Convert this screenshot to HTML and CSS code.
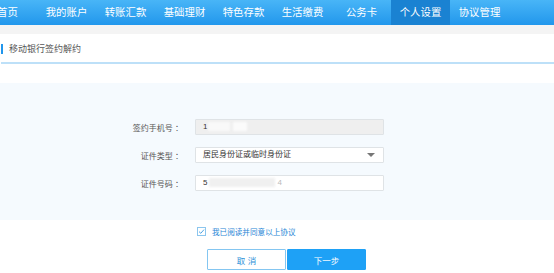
FILE: index.html
```html
<!DOCTYPE html>
<html>
<head>
  <title>移动银行签约解约</title>
  <meta charset="utf-8">
  <link rel="stylesheet" href="styles.css">
</head>
<body>
  <nav class="topnav">
    <a>首页</a>
    <a>我的账户</a>
    <a>转账汇款</a>
    <a>基础理财</a>
    <a>特色存款</a>
    <a>生活缴费</a>
    <a>公务卡</a>
    <a class="active">个人设置</a>
    <a>协议管理</a>
  </nav>
  <div class="subbar"></div>
  <div class="page-title">移动银行签约解约</div>

  <form class="sign-form">
    <div class="row">
      <label>签约手机号 ：</label>
      <div class="field readonly">1<span class="mask m1"></span><span class="mask m2"></span></div>
    </div>
    <div class="row">
      <label>证件类型 ：</label>
      <div class="field select">居民身份证或临时身份证<span class="arrow"></span></div>
    </div>
    <div class="row">
      <label>证件号码 ：</label>
      <div class="field">5<span class="mask m3"></span><span class="faint">4</span></div>
    </div>
  </form>

  <div class="agree">
    <span class="checkbox">
      <svg width="9" height="9" viewBox="0 0 9 9"><rect x="0.5" y="0.5" width="8" height="8" fill="#fff" stroke="#8cc6ee"/><path d="M2 4.6 L3.8 6.3 L7 2.6" fill="none" stroke="#3a9be0" stroke-width="0.9"/></svg>
    </span>
    我已阅读并同意以上协议
  </div>

  <div class="actions">
    <button type="button" class="btn btn-cancel">取 消</button>
    <button type="button" class="btn btn-next">下一步</button>
  </div>
</body>
</html>
```
FILE: styles.css
```css
body {
  margin: 0;
  padding: 0;
  background: #fff;
  font-family: "Liberation Sans", "Noto Sans CJK SC", sans-serif;
  color: #444;
  overflow: hidden;
}
.topnav {
  display: flex;
  height: 25px;
  margin-left: -22px;
  background: linear-gradient(#48b5f7, #2297ec);
}
.topnav a {
  width: 59px;
  flex: none;
  text-align: center;
  line-height: 25px;
  font-size: 10.4px;
  color: #fff;
}
.topnav a.active {
  background: #1a82d2;
}
.subbar {
  height: 9px;
  background: #f4f4f4;
}
.page-title {
  position: relative;
  height: 28px;
  line-height: 31px;
  padding-left: 8px;
  margin-left: 1px;
  font-size: 9px;
  color: #555;
  border-bottom: 2px solid #bde0f8;
}
.page-title::before {
  content: "";
  position: absolute;
  left: 0;
  top: 10px;
  width: 2px;
  height: 10px;
  background: #2196ec;
}
.sign-form {
  margin: 19px 0 0;
  padding: 36px 0 29px;
  background: #f5fafe;
  display: flex;
  flex-direction: column;
  gap: 12px;
}
.row {
  display: flex;
  align-items: center;
  height: 16px;
}
.row label {
  width: 183px;
  text-align: right;
  font-size: 8px;
  color: #555;
}
.field {
  position: relative;
  margin-left: 12px;
  width: 175px;
  height: 14px;
  line-height: 14px;
  padding-left: 7px;
  padding-right: 5px;
  border: 1px solid #dfe3e6;
  background: #fff;
  font-size: 8px;
  color: #333;
  border-radius: 1px;
}
.field.readonly {
  background: #efefef;
}
.mask {
  display: inline-block;
  vertical-align: middle;
  height: 9px;
  filter: blur(1.2px);
}
.m1 { width: 22px; margin-left: 1px; background: #f9f9f9; }
.m2 { width: 14px; margin-left: 3px; background: #fbfbfb; }
.m3 { width: 66px; margin-left: 2px; background: #f0f0f0; }
.faint {
  color: #bbb;
  margin-left: 2px;
}
.arrow {
  position: absolute;
  right: 8px;
  top: 5px;
  border-left: 4px solid transparent;
  border-right: 4px solid transparent;
  border-top: 4px solid #777;
}
.agree {
  display: flex;
  align-items: center;
  margin: 7px 0 0 197px;
  height: 9px;
  font-size: 7.6px;
  color: #1f86d6;
}
.checkbox {
  display: flex;
  margin-right: 6px;
}
.actions {
  display: flex;
  margin: 13px 0 0 207px;
  gap: 1px;
}
.btn {
  width: 79px;
  height: 21px;
  padding: 0;
  font-family: inherit;
  font-size: 8.5px;
  border-radius: 1px;
  cursor: pointer;
}
.btn-cancel {
  background: #fff;
  border: 1px solid #84c6f1;
  color: #2d8fd8;
}
.btn-next {
  background: #1ea1f6;
  border: 1px solid #1ea1f6;
  color: #fff;
}
```
